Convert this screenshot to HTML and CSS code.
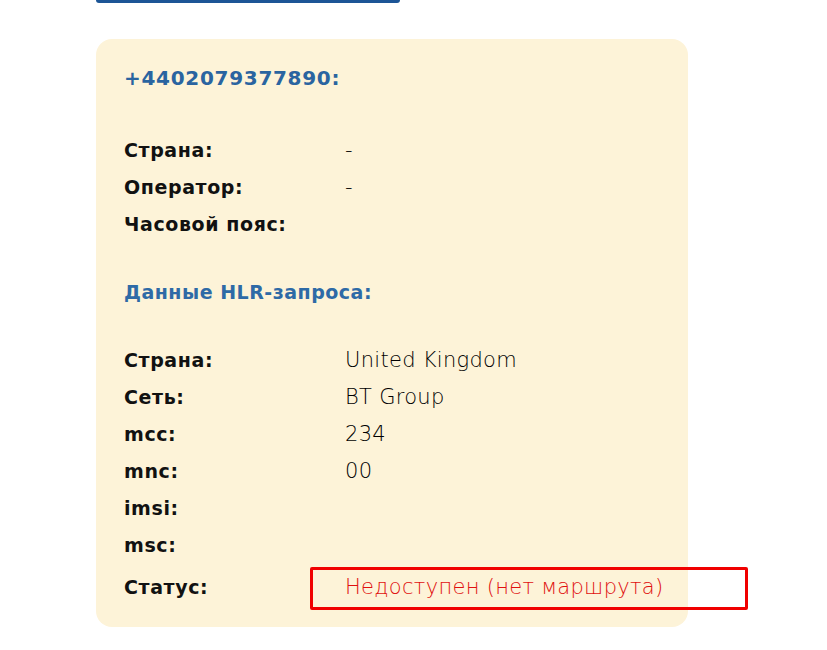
FILE: index.html
```html
<!DOCTYPE html>
<html lang="ru">
<head>
<meta charset="utf-8">
<link rel="stylesheet" href="styles.css">
</head>
<body>
<div class="page">
  <div class="topbtn"></div>
  <div class="card">
    <div class="phone">+4402079377890:</div>
    <div class="rows first">
      <div class="label">Страна:</div><div class="value">-</div>
      <div class="label">Оператор:</div><div class="value">-</div>
      <div class="label">Часовой пояс:</div><div class="value"></div>
    </div>
    <div class="heading">Данные HLR-запроса:</div>
    <div class="rows second">
      <div class="label">Страна:</div><div class="value">United Kingdom</div>
      <div class="label">Сеть:</div><div class="value">BT Group</div>
      <div class="label">mcc:</div><div class="value">234</div>
      <div class="label">mnc:</div><div class="value">00</div>
      <div class="label">imsi:</div><div class="value"></div>
      <div class="label">msc:</div><div class="value"></div>
      <div class="label status">Статус:</div><div class="value status red">Недоступен (нет маршрута)</div>
    </div>
    <div class="highlight"></div>
  </div>
</div>
</body>
</html>
```
FILE: styles.css
```css
html, body {
  margin: 0;
  padding: 0;
  background: #ffffff;
}
body {
  font-family: "DejaVu Sans", "Liberation Sans", sans-serif;
  color: #111111;
}
.page {
  padding-left: 96px;
  width: 592px;
}
.topbtn {
  width: 304px;
  height: 3px;
  background: #1c5596;
  border-radius: 0 0 3px 3px;
}
.card {
  position: relative;
  margin-top: 36px;
  background: #fdf3d8;
  border-radius: 16px;
  padding: 24px 28px 22px 28px;
  box-sizing: border-box;
  height: 588px;
}
.phone {
  font-size: 20px;
  font-weight: 700;
  letter-spacing: 0.7px;
  color: #2a64a0;
  line-height: 30px;
}
.heading {
  font-size: 19px;
  font-weight: 700;
  letter-spacing: 0.5px;
  color: #2e6aa6;
  line-height: 30px;
  margin-top: 35px;
}
.rows {
  display: grid;
  grid-template-columns: 221px 1fr;
  grid-auto-rows: 37px;
  align-items: center;
}
.rows.first {
  margin-top: 38px;
}
.rows.second {
  margin-top: 34px;
}
.label {
  font-size: 19px;
  font-weight: 700;
  letter-spacing: 0.6px;
  color: #111111;
  white-space: nowrap;
}
.value {
  font-family: "DejaVu Sans ExtraLight", "DejaVu Sans", sans-serif;
  font-size: 21px;
  font-weight: 200;
  letter-spacing: 0.3px;
  color: #000000;
  white-space: nowrap;
}
.label.status, .value.status {
  padding-top: 10px;
}
.red {
  color: #e0100f;
}
.highlight {
  position: absolute;
  left: 214px;
  top: 528px;
  width: 438px;
  height: 43px;
  border: 3px solid #f00000;
  box-sizing: border-box;
  border-radius: 2px;
}
```
